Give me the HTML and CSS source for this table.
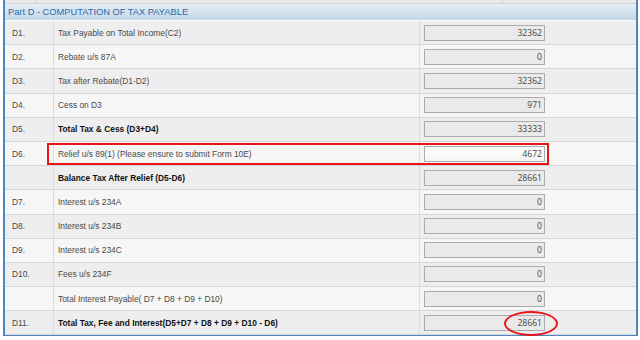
FILE: index.html
```html
<!DOCTYPE html>
<html>
<head>
    <title>Part D - Computation of Tax Payable</title>
    <link rel="stylesheet" href="styles.css">
</head>
<body>
    <div class="panel">
        <div class="prev-strip"><span class="c1"></span><span class="c2"></span></div>
        <div class="panel-head">Part D - COMPUTATION OF TAX PAYABLE</div>

        <div class="rows">
            <div class="row">
                <div class="code">D1.</div>
                <div class="label">Tax Payable on Total Income(C2)</div>
                <div class="value"><input class="amount" type="text" value="32362" readonly></div>
            </div>
            <div class="row">
                <div class="code">D2.</div>
                <div class="label">Rebate u/s 87A</div>
                <div class="value"><input class="amount" type="text" value="0" readonly></div>
            </div>
            <div class="row">
                <div class="code">D3.</div>
                <div class="label">Tax after Rebate(D1-D2)</div>
                <div class="value"><input class="amount" type="text" value="32362" readonly></div>
            </div>
            <div class="row">
                <div class="code">D4.</div>
                <div class="label">Cess on D3</div>
                <div class="value"><input class="amount" type="text" value="971" readonly></div>
            </div>
            <div class="row total">
                <div class="code">D5.</div>
                <div class="label">Total Tax &amp; Cess (D3+D4)</div>
                <div class="value"><input class="amount" type="text" value="33333" readonly></div>
            </div>
            <div class="row">
                <div class="code">D6.</div>
                <div class="label">Relief u/s 89(1) (Please ensure to submit Form 10E)</div>
                <div class="value"><input class="amount editable" type="text" value="4672"></div>
            </div>
            <div class="row total">
                <div class="code"></div>
                <div class="label">Balance Tax After Relief (D5-D6)</div>
                <div class="value"><input class="amount" type="text" value="28661" readonly></div>
            </div>
            <div class="row">
                <div class="code">D7.</div>
                <div class="label">Interest u/s 234A</div>
                <div class="value"><input class="amount" type="text" value="0" readonly></div>
            </div>
            <div class="row">
                <div class="code">D8.</div>
                <div class="label">Interest u/s 234B</div>
                <div class="value"><input class="amount" type="text" value="0" readonly></div>
            </div>
            <div class="row">
                <div class="code">D9.</div>
                <div class="label">Interest u/s 234C</div>
                <div class="value"><input class="amount" type="text" value="0" readonly></div>
            </div>
            <div class="row">
                <div class="code">D10.</div>
                <div class="label">Fees u/s 234F</div>
                <div class="value"><input class="amount" type="text" value="0" readonly></div>
            </div>
            <div class="row">
                <div class="code"></div>
                <div class="label">Total Interest Payable( D7 + D8 + D9 + D10)</div>
                <div class="value"><input class="amount" type="text" value="0" readonly></div>
            </div>
            <div class="row total">
                <div class="code">D11.</div>
                <div class="label">Total Tax, Fee and Interest(D5+D7 + D8 + D9 + D10 - D6)</div>
                <div class="value"><input class="amount" type="text" value="28661" readonly></div>
            </div>
        </div>

        <!-- red highlight marks drawn over the form -->
        <div class="mark mark-box"></div>
        <div class="mark mark-ring"></div>
    </div>
</body>
</html>
```

FILE: styles.css
```css
body {
    margin: 0;
    padding: 0;
    background-color: #fff;
    font-family: "Liberation Sans", Arial, sans-serif;
}
.panel {
    position: relative;
    margin-left: 3px;
    width: 631px;
    height: 334px;
    border-left: 2px solid #4f86c0;
    border-right: 2px solid #4f86c0;
    border-bottom: 2px solid #4f86c0;
    background: #f4f4f4;
}
.prev-strip {
    position: relative;
    height: 3px;
    background: #e9e9e9;
    border-bottom: 1px solid #d2d2d2;
}
.prev-strip span {
    position: absolute;
    top: 0;
    width: 1px;
    height: 3px;
    background: #cfcfcf;
}
.prev-strip .c1 { left: 31px; }
.prev-strip .c2 { left: 497px; }
.panel-head {
    height: 16px;
    line-height: 16px;
    padding-left: 3px;
    font-size: 9.3px;
    color: #2c6aa8;
    background: linear-gradient(#e6eef6, #d2e0ed 55%, #c6d8e9);
    border-bottom: 1px solid #fff;
}
.rows {
    display: grid;
    grid-auto-rows: 24.2px;
}
.row {
    display: grid;
    grid-template-columns: 49px 366px 1fr;
    background: #eeeeee;
    border-bottom: 1px solid #d6d6d6;
    box-sizing: border-box;
    font-size: 8.4px;
    color: #4a4a4a;
}
.row:nth-child(even) {
    background: #f6f6f6;
}
.row > div {
    display: flex;
    align-items: center;
}
.code {
    padding-left: 7px;
    border-right: 1px solid #dcdcdc;
}
.label {
    padding-left: 4px;
    border-right: 1px solid #dcdcdc;
}
.total .label {
    font-weight: bold;
    color: #111;
}
.value {
    padding-left: 4px;
}
.amount {
    width: 121px;
    height: 16px;
    box-sizing: border-box;
    margin: 0;
    padding: 0 2px 0 0;
    border: 1px solid #ababab;
    background: #eaeaea;
    text-align: right;
    font-family: "Open Sans", "DejaVu Sans", sans-serif;
    font-size: 8.6px;
    color: #444;
    outline: none;
}
.amount.editable {
    background: linear-gradient(#ffffff, #f4f4f4);
}
.mark {
    position: absolute;
    border: 2px solid #e8141a;
    box-sizing: border-box;
}
.mark-box {
    left: 42px;
    top: 143px;
    width: 502px;
    height: 22px;
}
.mark-ring {
    left: 499px;
    top: 311px;
    width: 54px;
    height: 25px;
    border-radius: 50%;
}
```
